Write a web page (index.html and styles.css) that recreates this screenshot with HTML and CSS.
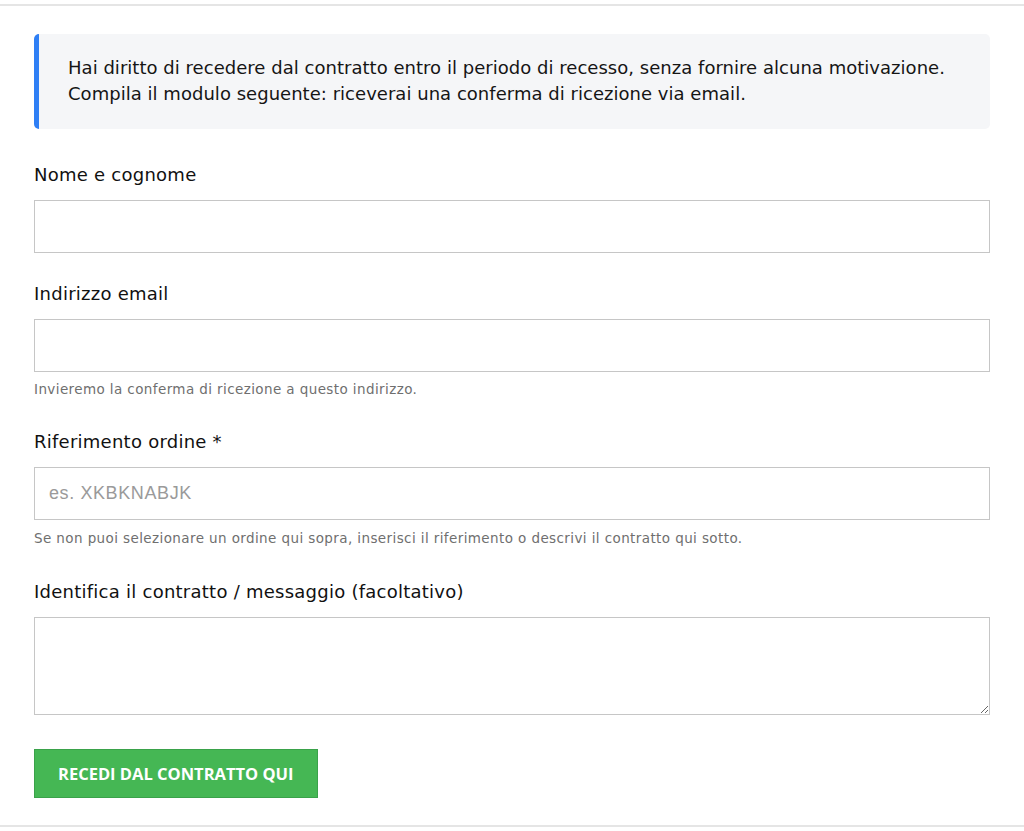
FILE: index.html
```html
<!DOCTYPE html>
<html lang="it">
<head>
<meta charset="utf-8">
<title>Recesso dal contratto</title>
<link rel="stylesheet" href="styles.css">
</head>
<body>
<main class="frame">
  <div class="notice">
    <p>Hai diritto di recedere dal contratto entro il periodo di recesso, senza fornire alcuna motivazione.<br>Compila il modulo seguente: riceverai una conferma di ricezione via email.</p>
  </div>
  <form class="form">
    <div class="field">
      <label class="label" for="nome">Nome e cognome</label>
      <input class="input" id="nome" type="text">
    </div>
    <div class="field">
      <label class="label" for="email">Indirizzo email</label>
      <input class="input" id="email" type="email">
      <p class="help">Invieremo la conferma di ricezione a questo indirizzo.</p>
    </div>
    <div class="field field-after-help">
      <label class="label" for="ordine">Riferimento ordine *</label>
      <input class="input" id="ordine" type="text" placeholder="es. XKBKNABJK">
      <p class="help help-low">Se non puoi selezionare un ordine qui sopra, inserisci il riferimento o descrivi il contratto qui sotto.</p>
    </div>
    <div class="field field-after-help field-last">
      <label class="label" for="msg">Identifica il contratto / messaggio (facoltativo)</label>
      <textarea class="textarea" id="msg"></textarea>
    </div>
    <button class="button" type="button">RECEDI DAL CONTRATTO QUI</button>
  </form>
</main>
</body>
</html>
```

FILE: styles.css
```css
* { box-sizing: border-box; }
html, body { margin: 0; padding: 0; background: #fff; }
body {
  font-family: "DejaVu Sans", "Open Sans", sans-serif;
  color: #111;
}
.frame {
  margin-top: 4px;
  height: 823px;
  border-top: 2px solid #e5e5e5;
  border-bottom: 2px solid #e5e5e5;
  padding: 28px 34px 0 34px;
}
.notice {
  width: 956px;
  height: 95px;
  background: #f5f6f8;
  border-left: 5px solid #2f7ff5;
  border-radius: 5px;
  padding: 21px 29px;
}
.notice p {
  margin: 0;
  font-size: 18px;
  line-height: 26px;
  letter-spacing: 0.03px;
  color: #151515;
}
.form { display: flex; flex-direction: column; width: 956px; }
.field { display: flex; flex-direction: column; }
.field:first-child { margin-top: 33px; }
.field + .field { margin-top: 28px; }
.field + .field-after-help { margin-top: 30px; }
.field + .field-last { margin-top: 31px; }
.label {
  font-size: 18px;
  line-height: 26px;
  letter-spacing: 0.25px;
  color: #111;
  margin-bottom: 12px;
}
.input {
  width: 100%;
  height: 53px;
  border: 1px solid #c6c6c6;
  background: #fff;
  font-family: "Liberation Sans", Arial, sans-serif;
  font-size: 18px;
  letter-spacing: 0.6px;
  padding: 0 14px;
}
.input::placeholder { color: #9a9a9a; }
.help {
  margin: 7px 0 0;
  font-size: 13.5px;
  line-height: 20px;
  letter-spacing: 0.4px;
  color: #6f6f6f;
}
.help-low { margin-top: 8px; }
.textarea {
  width: 100%;
  height: 98px;
  border: 1px solid #c6c6c6;
  resize: vertical;
  font-family: "Liberation Sans", Arial, sans-serif;
}
.button {
  margin-top: 34px;
  align-self: flex-start;
  height: 49px;
  padding: 0 23px;
  background: #45b754;
  border: 1px solid #3aa24a;
  color: #fff;
  font-family: "Open Sans", "DejaVu Sans", sans-serif;
  font-weight: 700;
  font-size: 16.5px;
}
```
